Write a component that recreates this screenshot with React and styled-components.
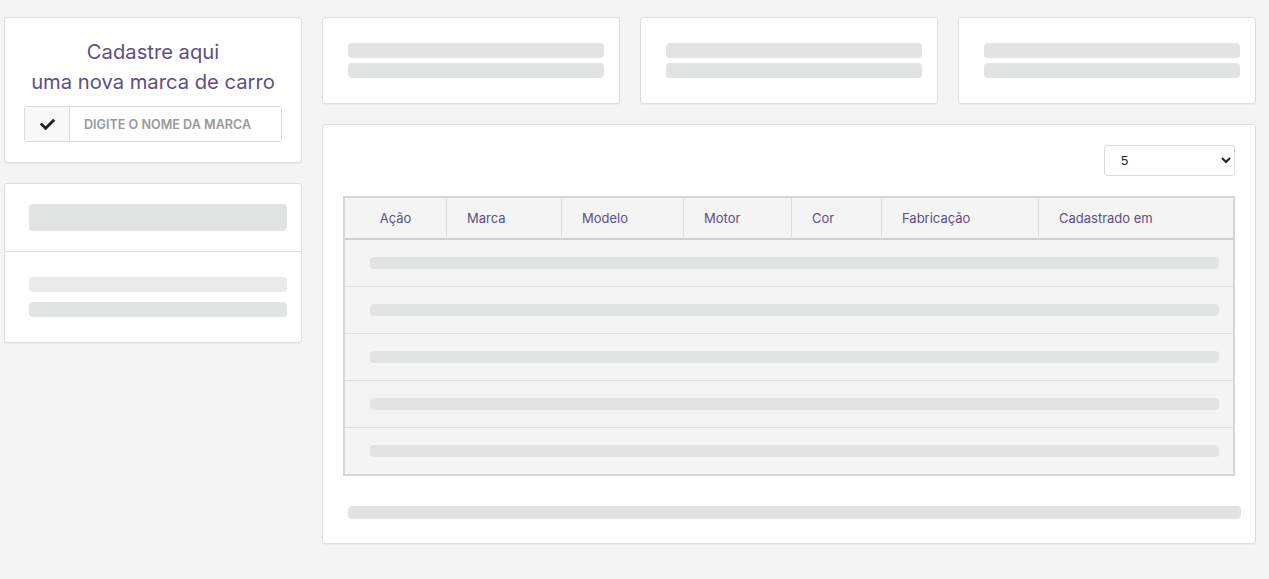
import React from "react";
import styled, { createGlobalStyle } from "styled-components";
import { FaCheck } from "react-icons/fa";

const Global = createGlobalStyle`
  html, body { margin: 0; padding: 0; background: #f4f4f4; }
  body { font-family: Inter, "Open Sans", "Liberation Sans", sans-serif; color: #333; }
  * { box-sizing: border-box; }
`;

const Page = styled.div`
  display: flex;
  gap: 20px;
  padding: 17px 13px 20px 4px;
  align-items: flex-start;
`;

const Sidebar = styled.aside`
  width: 298px;
  flex: none;
  display: flex;
  flex-direction: column;
  gap: 20px;
`;

const Main = styled.main`
  flex: 1;
  min-width: 0;
  display: flex;
  flex-direction: column;
  gap: 20px;
`;

const Card = styled.section`
  background: #fff;
  border: 1px solid #dedede;
  border-radius: 3px;
  box-shadow: 0 1px 1px rgba(0, 0, 0, 0.04);
`;

const FormCard = styled(Card)`
  padding: 19px 19px 20px;
`;

const Title = styled.h2`
  margin: 0 0 9px;
  text-align: center;
  font-weight: 400;
  font-size: 20.2px;
  line-height: 30px;
  color: #5f4e86;
`;

const InputGroup = styled.div`
  display: flex;
  height: 36px;
  border: 1px solid #dcdcdc;
  border-radius: 3px;
  overflow: hidden;
`;

const Addon = styled.span`
  width: 45px;
  flex: none;
  display: flex;
  align-items: center;
  justify-content: center;
  background: #f8f8f8;
  border-right: 1px solid #dcdcdc;
  color: #222;
`;

const TextInput = styled.input`
  flex: 1;
  min-width: 0;
  border: 0;
  outline: none;
  padding: 0 14px;
  font-family: inherit;
  font-size: 12.6px;
  background: #fff;
  &::placeholder {
    color: #9a9a9a;
    font-weight: 600;
    text-transform: uppercase;
  }
`;

const Section = styled.div`
  padding: ${(p) => p.$pad};
  display: flex;
  flex-direction: column;
  gap: ${(p) => p.$gap || 0}px;
  & + & {
    border-top: 1px solid #e0e0e0;
  }
`;

const Bar = styled.div`
  height: ${(p) => p.$h}px;
  border-radius: 4px;
  background: ${(p) => (p.$light ? "#e9eaea" : "#e2e3e3")};
`;

const StatRow = styled.div`
  display: grid;
  grid-template-columns: repeat(3, 1fr);
  gap: 20px;
`;

const StatCard = styled(Card)`
  padding: 25px 15px 25px 25px;
  display: flex;
  flex-direction: column;
  gap: 5px;
`;

const TableCard = styled(Card)`
  padding: 20px 20px 24px;
  display: flex;
  flex-direction: column;
`;

const Toolbar = styled.div`
  display: flex;
  justify-content: flex-end;
  margin-bottom: 20px;
`;

const Select = styled.select`
  width: 131px;
  height: 31px;
  border: 1px solid #dadada;
  border-radius: 3px;
  background: #fff;
  padding: 0 8px 0 12px;
  font-family: "Liberation Sans", Arial, sans-serif;
  font-size: 13px;
  color: #222;
`;

const Table = styled.table`
  width: 100%;
  border-collapse: separate;
  border-spacing: 0;
  border: 2px solid #d6d6d6;
  background: #f4f4f4;
  table-layout: fixed;
`;

const Th = styled.th`
  padding: 12px 0 12px ${(p) => (p.$center ? 0 : 20)}px;
  line-height: 16px;
  text-align: ${(p) => (p.$center ? "center" : "left")};
  font-weight: 400;
  font-size: 13px;
  color: #5f4e86;
  border-left: 1px solid #dedede;
  border-bottom: 2px solid #cfcfcf;
  &:first-child { border-left: 0; }
`;

const Row = styled.tr`
  &:not(:last-child) > td {
    border-bottom: 1px solid #dedede;
  }
`;

const Td = styled.td`
  padding: 17px 14px 17px 25px;
`;

const FooterBar = styled.div`
  margin: 30px -6px 0 5px;
`;

const columns = [
  { label: "Ação", w: 101, center: true },
  { label: "Marca", w: 115 },
  { label: "Modelo", w: 122 },
  { label: "Motor", w: 108 },
  { label: "Cor", w: 90 },
  { label: "Fabricação", w: 157 },
  { label: "Cadastrado em" },
];

export default function App() {
  return (
    <>
      <Global />
      <Page>
        <Sidebar>
          <FormCard>
            <Title>
              Cadastre aqui
              <br />
              uma nova marca de carro
            </Title>
            <InputGroup>
              <Addon>
                <FaCheck size={15} />
              </Addon>
              <TextInput placeholder="Digite o nome da marca" />
            </InputGroup>
          </FormCard>
          <Card>
            <Section $pad="20px 14px 20px 24px">
              <Bar $h={27} />
            </Section>
            <Section $pad="25px 14px 25px 24px" $gap={10}>
              <Bar $h={15} $light />
              <Bar $h={15} />
            </Section>
          </Card>
        </Sidebar>
        <Main>
          <StatRow>
            {[0, 1, 2].map((i) => (
              <StatCard key={i}>
                <Bar $h={15} />
                <Bar $h={15} />
              </StatCard>
            ))}
          </StatRow>
          <TableCard>
            <Toolbar>
              <Select defaultValue="5">
                <option value="5">5</option>
                <option value="10">10</option>
                <option value="25">25</option>
              </Select>
            </Toolbar>
            <Table>
              <colgroup>
                {columns.map((c) => (
                  <col key={c.label} style={c.w ? { width: c.w } : undefined} />
                ))}
              </colgroup>
              <thead>
                <tr>
                  {columns.map((c) => (
                    <Th key={c.label} $center={c.center}>
                      {c.label}
                    </Th>
                  ))}
                </tr>
              </thead>
              <tbody>
                {[0, 1, 2, 3, 4].map((r) => (
                  <Row key={r}>
                    <Td colSpan={7}>
                      <Bar $h={12} />
                    </Td>
                  </Row>
                ))}
              </tbody>
            </Table>
            <FooterBar>
              <Bar $h={13} />
            </FooterBar>
          </TableCard>
        </Main>
      </Page>
    </>
  );
}
